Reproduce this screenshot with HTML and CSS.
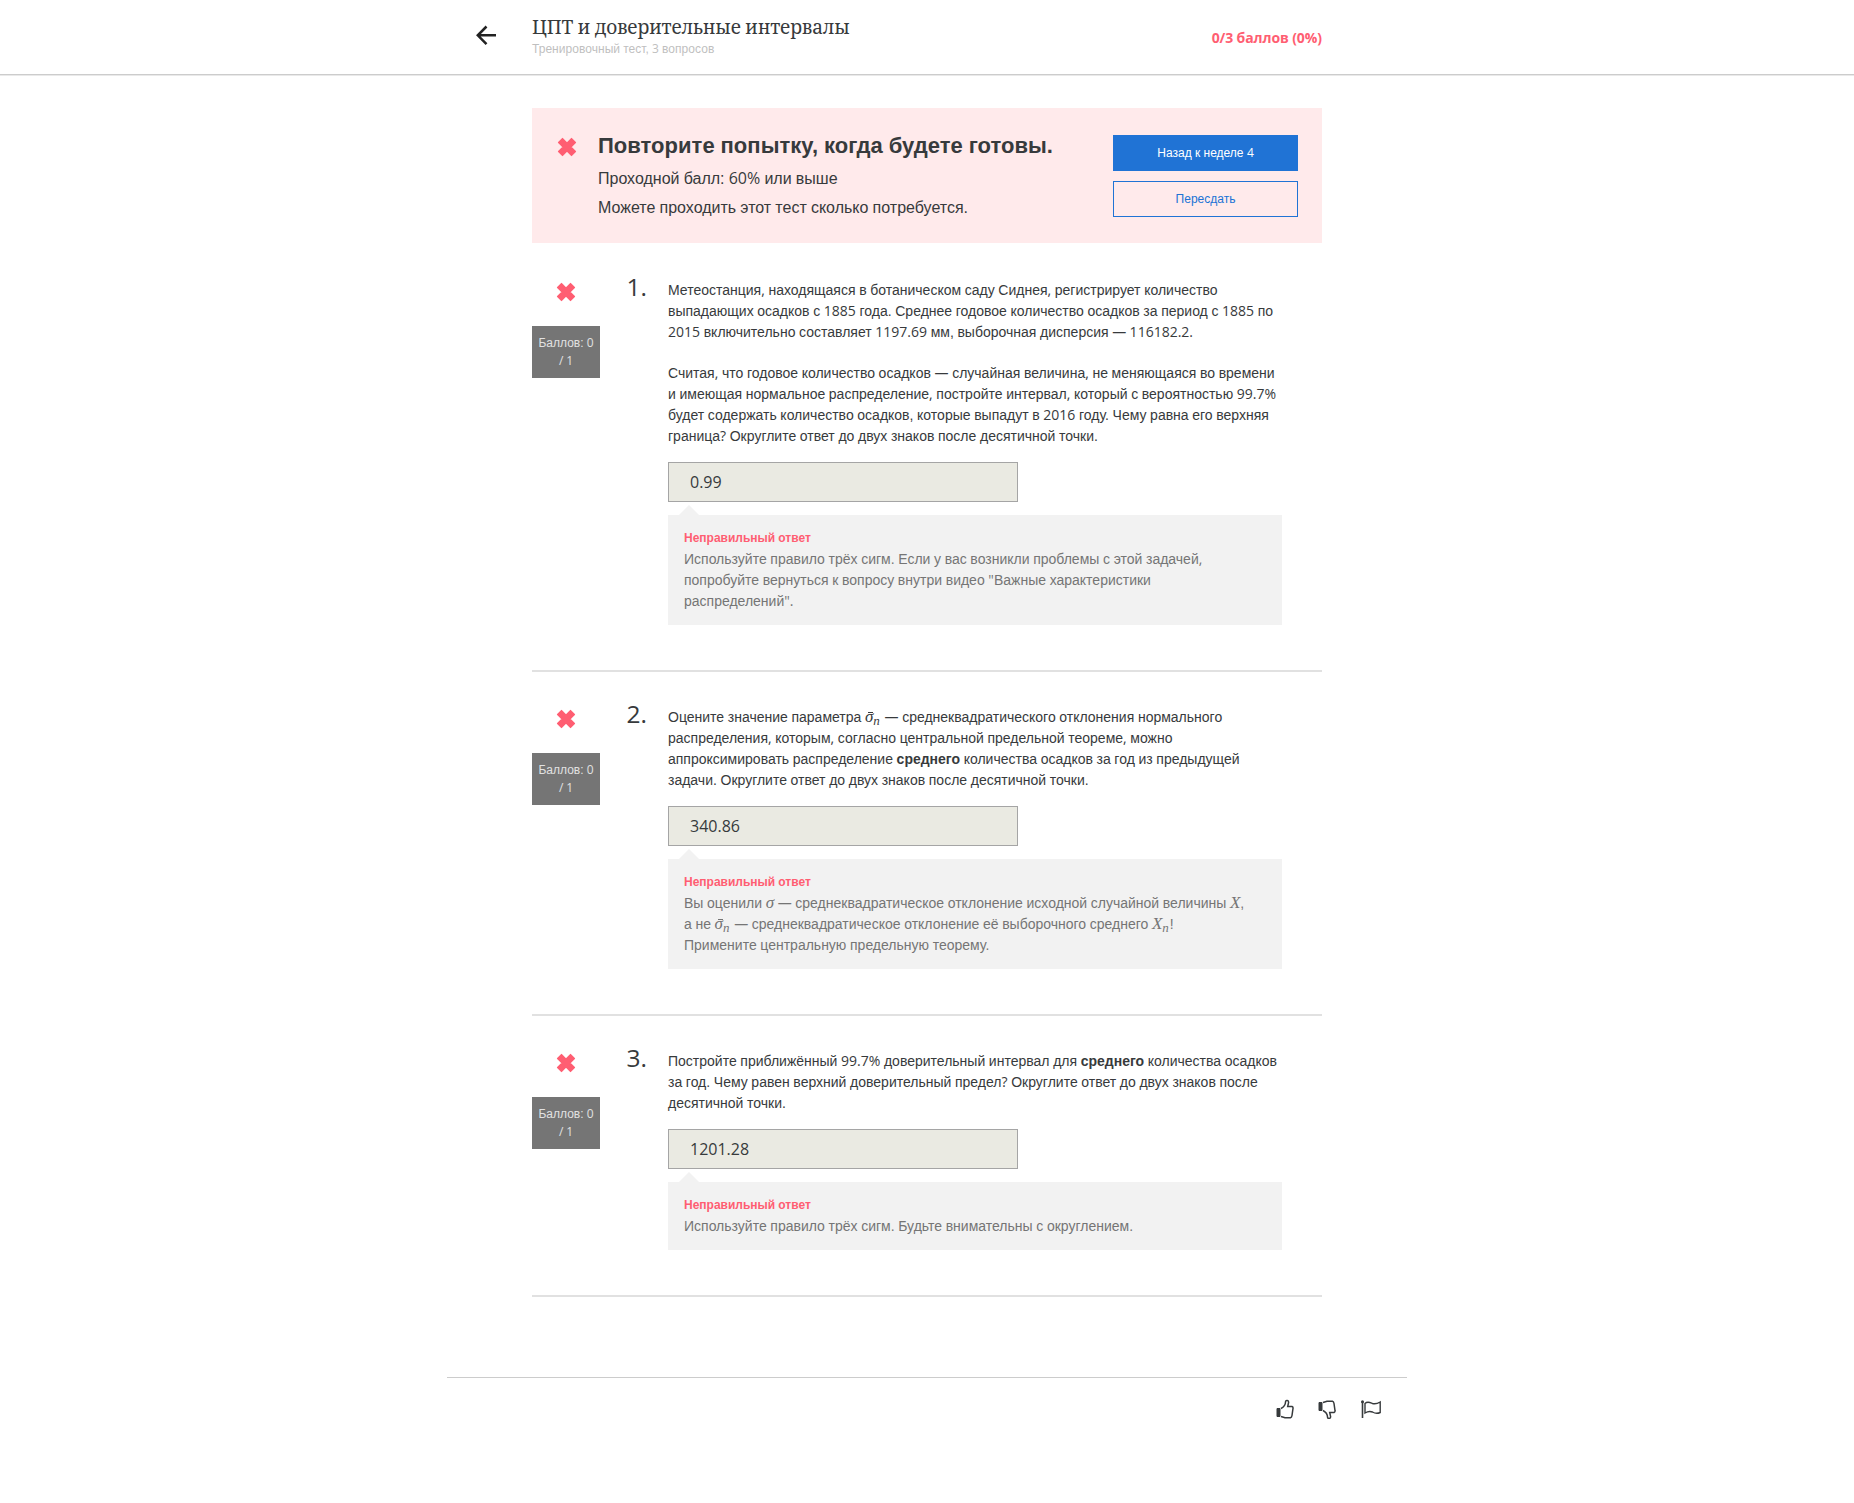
FILE: index.html
```html
<!DOCTYPE html>
<html lang="ru">
<head>
<meta charset="utf-8">
<title>ЦПТ и доверительные интервалы</title>
<link rel="stylesheet" href="styles.css">
</head>
<body>
<svg class="defs" width="0" height="0">
  <symbol id="cross" viewBox="0 0 20 20"><path d="M5.500 1.700L10 6.200L14.500 1.700L18.300 5.500L13.800 10L18.300 14.500L14.500 18.300L10 13.800L5.500 18.300L1.700 14.500L6.200 10L1.700 5.500z" fill="currentColor" stroke="currentColor" stroke-width="1.600" stroke-linejoin="round"/></symbol>
</svg>
<header class="topbar">
  <div class="topbar-inner">
    <svg class="back" viewBox="0 0 20 20" width="20" height="20"><path d="M10.500 1.500L1.800 10.300L10.500 19.100M1.800 10.300H20" fill="none" stroke="currentColor" stroke-width="2.500"/></svg>
    <div class="heading">
      <h1>ЦПТ и доверительные интервалы</h1>
      <p>Тренировочный тест, <span class="n">3</span> вопросов</p>
    </div>
    <div class="total">0/3 баллов (0%)</div>
  </div>
</header>
<main class="content">
  <section class="banner">
    <svg class="cross"><use href="#cross"/></svg>
    <div class="banner-text">
      <h2>Повторите попытку, когда будете готовы.</h2>
      <p>Проходной балл: <span class="n">60%</span> или выше</p>
      <p>Можете проходить этот тест сколько потребуется.</p>
    </div>
    <div class="banner-actions">
      <button class="btn primary">Назад к неделе <span class="n">4</span></button>
      <button class="btn">Пересдать</button>
    </div>
  </section>

  <section class="question">
    <div class="side"><svg class="cross"><use href="#cross"/></svg><div class="score">Баллов: <span class="n">0<br>/ 1</span></div></div>
    <div class="number">1.</div>
    <div class="body">
      <p>Метеостанция<span class="n">,</span> находящаяся в ботаническом саду Сиднея<span class="n">,</span> регистрирует количество<br>выпадающих осадков с <span class="n">1885</span> года. Среднее годовое количество осадков за период с <span class="n">1885</span> по<br><span class="n">2015</span> включительно составляет <span class="n">1197.69</span> мм, выборочная дисперсия <span class="n">— 116182.2.</span></p>
      <p>Считая<span class="n">,</span> что годовое количество осадков <span class="n">—</span> случайная величина<span class="n">,</span> не меняющаяся во времени<br>и имеющая нормальное распределение<span class="n">,</span> постройте интервал<span class="n">,</span> который с вероятностью <span class="n">99.7%</span><br>будет содержать количество осадков, которые выпадут в <span class="n">2016</span> году. Чему равна его верхняя<br>граница<span class="n">?</span> Округлите ответ до двух знаков после десятичной точки.</p>
      <input class="answer" value="0.99" readonly>
      <div class="feedback">
        <h3>Неправильный ответ</h3>
        <p>Используйте правило трёх сигм. Если у вас возникли проблемы с этой задачей<span class="n">,</span><br>попробуйте вернуться к вопросу внутри видео <span class="n">"</span>Важные характеристики<br>распределений<span class="n">".</span></p>
      </div>
    </div>
  </section>

  <section class="question">
    <div class="side"><svg class="cross"><use href="#cross"/></svg><div class="score">Баллов: <span class="n">0<br>/ 1</span></div></div>
    <div class="number">2.</div>
    <div class="body">
      <p>Оцените значение параметра <span class="math wide"><span class="bar">σ</span><sub>n</sub></span> <span class="n">—</span> среднеквадратического отклонения нормального<br>распределения<span class="n">,</span> которым<span class="n">,</span> согласно центральной предельной теореме<span class="n">,</span> можно<br>аппроксимировать распределение <b>среднего</b> количества осадков за год из предыдущей<br>задачи. Округлите ответ до двух знаков после десятичной точки.</p>
      <input class="answer" value="340.86" readonly>
      <div class="feedback">
        <h3>Неправильный ответ</h3>
        <p>Вы оценили <span class="math">σ</span> <span class="n">—</span> среднеквадратическое отклонение исходной случайной величины <span class="math">X</span>,<br>а не <span class="math wide"><span class="bar">σ</span><sub>n</sub></span> <span class="n">—</span> среднеквадратическое отклонение её выборочного среднего <span class="math wide">X<sub>n</sub></span>!<br>Примените центральную предельную теорему.</p>
      </div>
    </div>
  </section>

  <section class="question">
    <div class="side"><svg class="cross"><use href="#cross"/></svg><div class="score">Баллов: <span class="n">0<br>/ 1</span></div></div>
    <div class="number">3.</div>
    <div class="body">
      <p>Постройте приближённый <span class="n">99.7%</span> доверительный интервал для <b>среднего</b> количества осадков<br>за год. Чему равен верхний доверительный предел<span class="n">?</span> Округлите ответ до двух знаков после<br>десятичной точки.</p>
      <input class="answer" value="1201.28" readonly>
      <div class="feedback">
        <h3>Неправильный ответ</h3>
        <p>Используйте правило трёх сигм. Будьте внимательны с округлением.</p>
      </div>
    </div>
  </section>
</main>
<footer class="reactions">
  <svg viewBox="0 0 18 20" width="18" height="20"><path d="M1 9.500H4V17.500H1z" fill="currentColor" stroke="currentColor"/><path d="M5 9.500C8 8 9.500 5 9.600 2.500C10 .8 12.800 1.200 12.600 3.500L11.700 7.500H16Q17.300 8 17 9.500L16 16.500Q15.700 18.400 14.500 18.700H9L5 17.500" fill="none" stroke="currentColor" stroke-width="1.500"/></svg>
  <svg viewBox="0 0 18 20" width="18" height="20"><g transform="matrix(1 0 0 -1 0 21)"><path d="M1 9.500H4V17.500H1z" fill="currentColor" stroke="currentColor"/><path d="M5 9.500C8 8 9.500 5 9.600 2.500C10 .8 12.800 1.200 12.600 3.500L11.700 7.500H16Q17.300 8 17 9.500L16 16.500Q15.700 18.400 14.500 18.700H9L5 17.500" fill="none" stroke="currentColor" stroke-width="1.500"/></g></svg>
  <svg viewBox="0 0 20 20" width="20" height="20"><path d="M1.500 2V19" fill="none" stroke="currentColor" stroke-width="1.600"/><circle cx="1.500" cy="2.700" r="1.500" fill="currentColor"/><path d="M4 4.500C6.500 2 9 3.500 11.500 4.500Q15 5.500 19.200 3V13.500C16 15 14 14.500 11.500 13Q8 11.500 4 14z" fill="none" stroke="currentColor" stroke-width="1.400"/></svg>
</footer>
</body>
</html>
```
FILE: styles.css
```css
* { box-sizing: border-box; }
body { margin: 0; background: #fff; color: #373a3c; font: 14px/21px "Liberation Sans", sans-serif; word-spacing: -0.25px; }
h1, h2, h3, p { margin: 0; }
.defs { display: block; }
.n { font-family: "Open Sans", sans-serif; line-height: 0; }
.topbar { height: 76px; border-bottom: 1px solid #e9e9e9; box-shadow: inset 0 -1px #ccc; }
.topbar-inner { width: 846px; margin-left: 476px; display: flex; }
.back { flex: none; margin: 25px 36px 0 0; color: #222; }
.heading { flex: 1; padding-top: 13px; }
h1 { font: 400 19px/28px "Noto Serif", "Droid Serif", "Liberation Serif", serif; letter-spacing: -0.22px; white-space: nowrap; }
.heading p { font-size: 12px; line-height: 16px; letter-spacing: 0.04px; color: #bfbfbf; }
.total { margin-top: 27px; font: 700 14px/21px "Open Sans", sans-serif; letter-spacing: -0.07px; color: #ff5e72; }
.content { width: 790px; margin: 32px auto 0; }
.banner { display: flex; height: 135px; margin-bottom: 2px; padding: 27px 24px 0 25px; background: #ffeaeb; }
.cross { flex: none; display: block; width: 20px; height: 20px; color: #ff5e72; }
.banner .cross { margin: 2px 21px 0 0; }
.banner-text { flex: 1; white-space: nowrap; }
h2 { font: 700 22px/22px "Liberation Sans", sans-serif; letter-spacing: 0.03px; }
.banner p { font-size: 16px; line-height: 29px; }
.banner h2 + p { margin-top: 7px; }
.banner-actions { display: flex; flex-direction: column; gap: 10px; width: 185px; }
.btn { height: 36px; padding: 0; border: 1px solid #2073d5; background: none; color: #2073d5; font: 12px/34px "Liberation Sans", sans-serif; }
.primary { background: #2073d5; color: #fff; }
.question { display: flex; align-items: flex-start; padding: 35px 0 45px; border-bottom: 2px solid #e1e1e1; }
.side { width: 68px; }
.side .cross { margin: 2px auto 24px; }
.score { height: 52px; padding-top: 8px; background: #757575; color: #e1e1e1; font-size: 12px; line-height: 18px; text-align: center; white-space: nowrap; }
.number { width: 47px; margin: -10.5px 21px 0 0; text-align: right; font: 24.5px/34px "Open Sans", sans-serif; }
.body { width: 614px; white-space: nowrap; }
.body > p + p { margin-top: 20px; }
.answer { display: block; width: 350px; height: 40px; margin: 15px 0 13px; padding: 0 21px; border: 1px solid #a5a5a5; background: #eaeae2; color: #373a3c; font: 16px "Open Sans", sans-serif; outline: 0; border-radius: 0; }
.feedback { position: relative; padding: 13px 16px; background: #f2f2f2; color: #757575; }
.feedback::before { content: ""; position: absolute; left: 11px; top: -10px; border: 10px solid transparent; border-top: 0; border-bottom-color: #f2f2f2; }
h3 { font-size: 12px; line-height: 21px; color: #ff5e72; }
.math { font: italic 17px/0 "Liberation Serif", serif; }
.wide { margin-right: 1px; }
.math sub { font-size: 13px; line-height: 0; vertical-align: -3px; }
.bar { position: relative; }
.bar::after { content: ""; position: absolute; left: 3px; width: 5px; top: 5px; height: 1px; background: currentColor; }
.reactions { width: 960px; margin: 80px auto 0; padding: 21px 26px 0; border-top: 1px solid #ccc; display: flex; justify-content: flex-end; gap: 24px; }
.reactions svg:last-child { margin-left: 1px; }
```
